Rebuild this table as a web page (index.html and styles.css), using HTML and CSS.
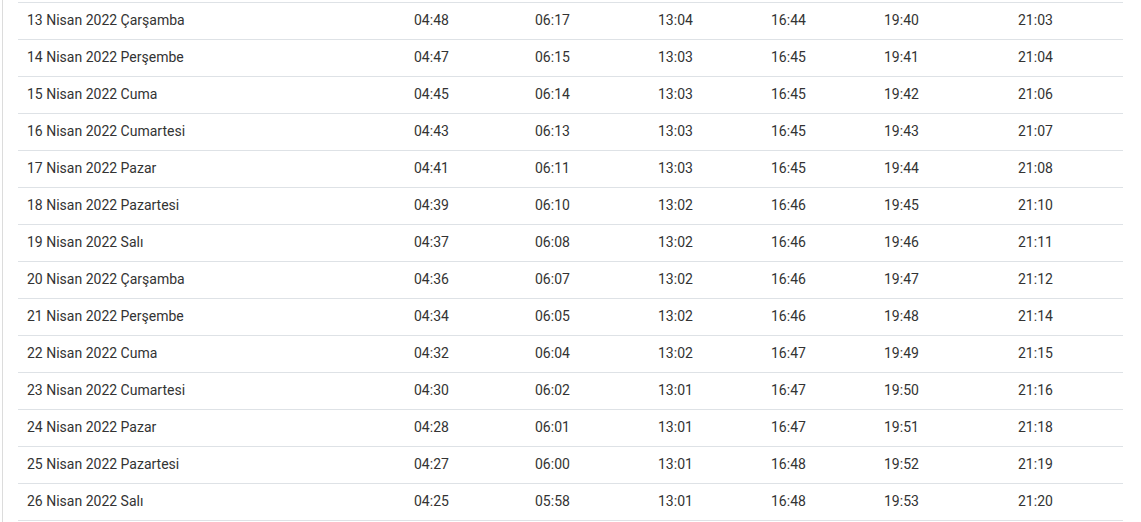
FILE: index.html
```html
<!DOCTYPE html>
<html lang="tr">
<head>
<meta charset="utf-8">
<link rel="stylesheet" href="styles.css">
</head>
<body>
<div class="frame">
<table class="times">
<colgroup>
<col class="c-date"><col class="c-a"><col class="c-b"><col class="c-c"><col class="c-d"><col class="c-e"><col class="c-f">
</colgroup>
<tbody>
<tr><td>13 Nisan 2022 Çarşamba</td><td>04:48</td><td>06:17</td><td>13:04</td><td>16:44</td><td>19:40</td><td>21:03</td></tr>
<tr><td>14 Nisan 2022 Perşembe</td><td>04:47</td><td>06:15</td><td>13:03</td><td>16:45</td><td>19:41</td><td>21:04</td></tr>
<tr><td>15 Nisan 2022 Cuma</td><td>04:45</td><td>06:14</td><td>13:03</td><td>16:45</td><td>19:42</td><td>21:06</td></tr>
<tr><td>16 Nisan 2022 Cumartesi</td><td>04:43</td><td>06:13</td><td>13:03</td><td>16:45</td><td>19:43</td><td>21:07</td></tr>
<tr><td>17 Nisan 2022 Pazar</td><td>04:41</td><td>06:11</td><td>13:03</td><td>16:45</td><td>19:44</td><td>21:08</td></tr>
<tr><td>18 Nisan 2022 Pazartesi</td><td>04:39</td><td>06:10</td><td>13:02</td><td>16:46</td><td>19:45</td><td>21:10</td></tr>
<tr><td>19 Nisan 2022 Salı</td><td>04:37</td><td>06:08</td><td>13:02</td><td>16:46</td><td>19:46</td><td>21:11</td></tr>
<tr><td>20 Nisan 2022 Çarşamba</td><td>04:36</td><td>06:07</td><td>13:02</td><td>16:46</td><td>19:47</td><td>21:12</td></tr>
<tr><td>21 Nisan 2022 Perşembe</td><td>04:34</td><td>06:05</td><td>13:02</td><td>16:46</td><td>19:48</td><td>21:14</td></tr>
<tr><td>22 Nisan 2022 Cuma</td><td>04:32</td><td>06:04</td><td>13:02</td><td>16:47</td><td>19:49</td><td>21:15</td></tr>
<tr><td>23 Nisan 2022 Cumartesi</td><td>04:30</td><td>06:02</td><td>13:01</td><td>16:47</td><td>19:50</td><td>21:16</td></tr>
<tr><td>24 Nisan 2022 Pazar</td><td>04:28</td><td>06:01</td><td>13:01</td><td>16:47</td><td>19:51</td><td>21:18</td></tr>
<tr><td>25 Nisan 2022 Pazartesi</td><td>04:27</td><td>06:00</td><td>13:01</td><td>16:48</td><td>19:52</td><td>21:19</td></tr>
<tr><td>26 Nisan 2022 Salı</td><td>04:25</td><td>05:58</td><td>13:01</td><td>16:48</td><td>19:53</td><td>21:20</td></tr>
</tbody>
</table>
</div>
</body>
</html>
```

FILE: styles.css
```css
html, body {
  margin: 0;
  padding: 0;
  background: #fff;
}
body {
  font-family: Roboto, "Liberation Sans", sans-serif;
  font-size: 14px;
  color: #333;
}
.frame {
  margin-left: 2px;
  width: 1135px;
  border-left: 1px solid #dcdcdc;
  border-right: 1px solid #dcdcdc;
  padding: 2px 14px 10px 15px;
  box-sizing: content-box;
}
.times {
  width: 1105px;
  table-layout: fixed;
  border-collapse: collapse;
}
.c-date { width: 387px; }
.c-a { width: 121px; }
.c-b { width: 123px; }
.c-c { width: 113px; }
.c-d { width: 113px; }
.c-e { width: 134px; }
.c-f { width: 114px; }
.times td {
  padding: 7px 9px 9px;
  border-top: 1px solid #dee2e6;
  vertical-align: top;
  line-height: 20px;
  white-space: nowrap;
}
.times tr:last-child td {
  border-bottom: 1px solid #dee2e6;
}
```
